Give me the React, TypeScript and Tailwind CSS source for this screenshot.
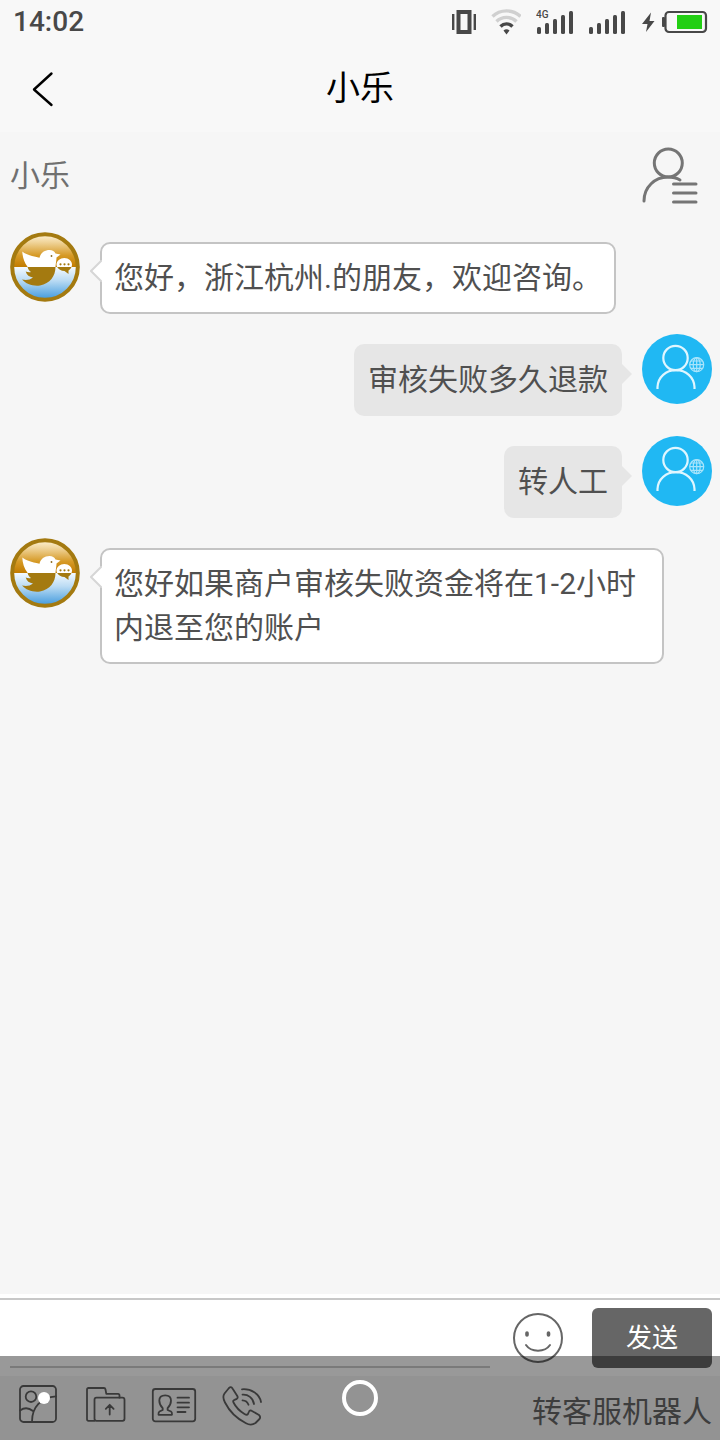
import type { ReactNode } from "react";

interface Message {
  readonly id: number;
  readonly from: "agent" | "user";
  readonly text: string;
}

const messages: readonly Message[] = [
  { id: 1, from: "agent", text: "您好，浙江杭州.的朋友，欢迎咨询。" },
  { id: 2, from: "user", text: "审核失败多久退款" },
  { id: 3, from: "user", text: "转人工" },
  { id: 4, from: "agent", text: "您好如果商户审核失败资金将在1-2小时内退至您的账户" },
];

function SignalBars({ label }: { readonly label?: string }) {
  return (
    <svg width="37" height="28" viewBox="0 0 37 28" fill="#484848">
      {label && (
        <text x="0" y="10" fontSize="10" fontWeight="500" fontFamily="Roboto, sans-serif">
          {label}
        </text>
      )}
      <rect x="1" y="19" width="4" height="7" rx="1.5" />
      <rect x="9" y="15" width="4" height="11" rx="1.5" />
      <rect x="17" y="11" width="4" height="15" rx="1.5" />
      <rect x="25" y="7" width="4" height="19" rx="1.5" />
      <rect x="33" y="3" width="4" height="23" rx="1.5" />
    </svg>
  );
}

function StatusBar() {
  return (
    <div className="flex h-11 items-center justify-between pl-[13px] pr-3 text-[#484848]">
      <span className="text-[28px] font-medium leading-8">14:02</span>
      <div className="flex items-center gap-[15px]">
        <svg width="24" height="28" viewBox="0 0 24 28" fill="none" stroke="#484848">
          <path d="M1.200 6v16M22.800 6v16" strokeWidth="2.400" />
          <rect x="6.500" y="4" width="11" height="20" strokeWidth="4" />
        </svg>
        <svg width="30" height="28" viewBox="0 0 30 28" fill="none" strokeWidth="3.400">
          <path d="M1.500 8.500C9 1 22 1 29.500 8.500" stroke="#d0d0d0" />
          <path d="M5.500 13.500C11 8 20 8 25.500 13.500" stroke="#d0d0d0" />
          <path d="M9.500 18.500C13 15 18 15 21.500 18.500" stroke="#484848" />
          <path d="M12.500 22.500Q15.500 20 18.500 22.500L15.500 26.500Z" fill="#484848" stroke="none" />
        </svg>
        <SignalBars label="4G" />
        <SignalBars />
        <div className="flex items-center gap-[6px]">
          <svg width="16" height="28" viewBox="0 0 16 28" fill="#484848">
            <path d="M11 4.500 2 16h5.500L6 24l8.500-11H9.500Z" />
          </svg>
          <svg width="46" height="28" viewBox="0 0 46 28">
            <rect x="0" y="9" width="3" height="10" rx="1" fill="#484848" />
            <rect x="3.500" y="4" width="40.500" height="20" rx="3.500" fill="none" stroke="#484848" strokeWidth="2.200" />
            <rect x="15" y="7" width="25" height="14" fill="#22cf13" />
          </svg>
        </div>
      </div>
    </div>
  );
}

function AgentAvatar() {
  return (
    <svg className="shrink-0" width="70" height="70" viewBox="0 0 70 70">
      <defs>
        <linearGradient id="sky" gradientUnits="userSpaceOnUse" x1="0" y1="2" x2="0" y2="35">
          <stop offset="0" stopColor="#fff3d6" />
          <stop offset="0.25" stopColor="#f0d49a" />
          <stop offset="0.65" stopColor="#d69a26" />
          <stop offset="1" stopColor="#c27c00" />
        </linearGradient>
        <linearGradient id="sea" gradientUnits="userSpaceOnUse" x1="0" y1="35" x2="0" y2="68">
          <stop offset="0" stopColor="#f4faff" />
          <stop offset="0.4" stopColor="#bcdcf4" />
          <stop offset="1" stopColor="#3d98dc" />
        </linearGradient>
        <clipPath id="above">
          <rect width="70" height="35" />
        </clipPath>
        <clipPath id="below">
          <rect y="35" width="70" height="35" />
        </clipPath>
        <g id="bird">
          <path d="M12.300 19.500C16 22.500 21 24 29.500 25.700C30.500 21 34.500 18 39.500 18C42.500 18 44.500 19.500 45.500 21.500L50.500 22.500L46.500 25.500C46.500 28 45.800 31 45.500 35C45.500 44 40 51.500 30 53.500C23 54.500 16 52 12 47.500C16 48.500 20 48 23 45.500C19.500 45 16.500 43 15.700 39.500C17.500 40.300 19.500 40.300 21 40C19 38.500 18 37 17.500 34.800C14 30 12.500 25 12.300 19.500Z" />
          <path d="M54.300 26c4.500 0 7.700 3 7.700 6.500c0 3-2 5-3.500 6v3.500l-4-3c-4.500 0-8-3-8-6.500s3.500-6.500 7.800-6.500Z" />
        </g>
      </defs>
      <circle cx="35" cy="35" r="33" fill="url(#sky)" clipPath="url(#above)" />
      <circle cx="35" cy="35" r="33" fill="url(#sea)" clipPath="url(#below)" />
      <g clipPath="url(#above)" fill="#fff">
        <use href="#bird" />
      </g>
      <g clipPath="url(#below)" fill="#a47a10">
        <use href="#bird" />
      </g>
      <circle cx="41.500" cy="24" r="0.900" fill="#8a6a20" />
      <circle cx="50.500" cy="32.300" r="1.100" fill="#a47a10" />
      <circle cx="54.500" cy="32.300" r="1.100" fill="#a47a10" />
      <circle cx="58.500" cy="32.300" r="1.100" fill="#a47a10" />
      <circle cx="35" cy="35" r="32.800" fill="none" stroke="#a47a10" strokeWidth="4" />
    </svg>
  );
}

function UserAvatar() {
  return (
    <svg className="shrink-0" width="70" height="70" viewBox="0 0 70 70" fill="none">
      <circle cx="35" cy="35" r="35" fill="#20b8f3" />
      <g stroke="#dff6ff" strokeWidth="2.200">
        <circle cx="33.500" cy="24" r="12.200" />
        <path d="M15.500 55v-2C16 43 24 36.200 34 36.200S52 43 52.500 53v2" />
      </g>
      <g stroke="#a9e4fb" strokeWidth="1.200">
        <circle cx="54.700" cy="30.700" r="7" />
        <ellipse cx="54.700" cy="30.700" rx="3.500" ry="7" />
        <path d="M47.700 30.700h14M54.700 23.700v14M49 27h11.400M49 34.400h11.400" />
      </g>
    </svg>
  );
}

function AgentMessage({ text }: { readonly text: string }) {
  return (
    <li className="flex items-start pl-[10px] pr-14">
      <AgentAvatar />
      <div className="relative ml-5 mt-[10px] rounded-[10px] border-2 border-[#c4c4c4] bg-white p-3">
        <svg className="absolute -left-3 top-4" width="12" height="22" viewBox="0 0 12 22">
          <path d="M12 0 1 11 12 22" fill="#fff" stroke="#d6d6d6" strokeWidth="2" />
        </svg>
        {text}
      </div>
    </li>
  );
}

function UserMessage({ text }: { readonly text: string }) {
  return (
    <li className="flex items-start justify-end pl-14 pr-2">
      <div className="relative mr-5 mt-[10px] rounded-[10px] bg-[#e6e6e6] p-[14px]">
        <svg className="absolute left-full top-5" width="10" height="20" viewBox="0 0 10 20">
          <path d="M0 0 10 10 0 20Z" fill="#e6e6e6" />
        </svg>
        {text}
      </div>
      <UserAvatar />
    </li>
  );
}

function ToolButton({ label, children }: { readonly label: string; readonly children: ReactNode }) {
  return (
    <button type="button" aria-label={label}>
      <svg
        width="48"
        height="48"
        viewBox="0 0 48 48"
        fill="none"
        stroke="#606060"
        strokeWidth="1.800"
        strokeLinecap="round"
        strokeLinejoin="round"
      >
        {children}
      </svg>
    </button>
  );
}

function Toolbar() {
  return (
    <div className="flex h-16 items-start justify-between bg-[#f5f5f5] pl-[14px] pr-2">
      <div className="flex gap-5 pt-1">
        <ToolButton label="图片">
          <rect x="6" y="6" width="36" height="36" rx="3.500" />
          <circle cx="17" cy="16.700" r="5.300" />
          <path d="M6 30.500C10 27.500 15 27.800 19 31M18 41.500C18 27 27 17.500 42 16.300" />
        </ToolButton>
        <ToolButton label="文件">
          <path d="M12.500 40.800H6.500Q5 40.800 5 39.300V9.500Q5 8 6.500 8H22Q23.200 8 23.500 9.500L24.300 13.800H36Q37.500 13.800 37.500 15.500V17.700" />
          <rect x="12.500" y="17.700" width="30" height="23.100" rx="2" />
          <path d="M27.700 34.500V24.800M23.800 28.800l3.900-4 3.900 4" />
        </ToolButton>
        <ToolButton label="名片">
          <rect x="2.800" y="9" width="42.400" height="32.300" rx="2.500" />
          <path d="M12.700 28.200C10.500 26 9.300 23 9.300 20.500C9.300 17.500 11.500 15.300 15.200 15.300S21 17.500 21 20.500C21 23 19.800 26 17.600 28.200V30L21 31.500Q22.200 32.200 22 34.800H8.500Q8.300 32.200 9.500 31.500L12.700 30Z" />
          <path d="M27.500 17.700H39M27.500 22.700H39M27.500 27.300H39M27.500 32h8" />
        </ToolButton>
        <ToolButton label="电话">
          <path d="M11 8L6.500 13.500Q4 17 7 22.500C11 30.500 18.500 38.500 28 43.200Q33 46 37.500 43L41.500 39Q43 37 41 35L33.500 30.700Q31.500 30 30.800 32L30 34Q29 35.500 26.500 34C21.500 31 17.500 26.500 15.500 22.500Q14.500 20.500 16.500 19.800L18.800 18.800Q20.300 17.800 19.300 16L14.500 8.500Q13 6 11 8Z" />
          <path d="M24 9.300C33 8.500 41.500 14 43 22M24.500 14.700C30 14.200 35 18 36 24M24.500 20.300Q29 20.500 30.500 24.700" />
        </ToolButton>
      </div>
      <button type="button" className="mt-[14px] text-[#666]">
        转客服机器人
      </button>
    </div>
  );
}

// Translucent system navigation bar, drawn over the bottom of the page
function SystemNav() {
  return (
    <div className="pointer-events-none absolute inset-x-0 bottom-0 grid h-[84px] grid-cols-3 items-center bg-black/40">
      <span className="ml-[38px] h-3 w-3 rounded-full bg-white" />
      <span className="h-9 w-9 justify-self-center rounded-full border-4 border-white" />
    </div>
  );
}

export default function App() {
  return (
    <div className="relative flex min-h-screen flex-col bg-[#f6f6f6] font-[Roboto,'Noto_Sans_CJK_SC',sans-serif] text-[30px] leading-[44px] text-[#505050]">
      <header className="bg-[#f8f8f8]">
        <StatusBar />
        <div className="grid h-[88px] grid-cols-[80px_1fr_80px] items-center">
          <button type="button" aria-label="返回" className="justify-self-start pl-5">
            <svg width="44" height="44" viewBox="0 0 44 44" fill="none" stroke="#000" strokeWidth="2.400" strokeLinecap="round" strokeLinejoin="round">
              <path d="M31.500 7.500 14 23.500 31.500 39" />
            </svg>
          </button>
          <h1 className="text-center text-[34px] text-black">小乐</h1>
        </div>
      </header>

      <main className="flex-1">
        <div className="flex h-[88px] items-center justify-between pl-[10px] pr-5">
          <h2 className="text-[#707070]">小乐</h2>
          <button type="button" aria-label="客服信息">
            <svg width="60" height="60" viewBox="0 0 60 60" fill="none" stroke="#757575" strokeWidth="3" strokeLinecap="round">
              <circle cx="28.300" cy="17" r="14" />
              <path d="M4 55C4 41 15 31 28 31Q35 31 40 34M33.500 38H56M33.500 47H56M33.500 56H56" />
            </svg>
          </button>
        </div>
        <ul className="flex flex-col gap-5 pt-3">
          {messages.map((message) =>
            message.from === "agent" ? (
              <AgentMessage key={message.id} text={message.text} />
            ) : (
              <UserMessage key={message.id} text={message.text} />
            ),
          )}
        </ul>
      </main>

      <footer className="bg-white pt-1">
        <form
          className="flex items-center border-t-2 border-[#c8c8c8] py-2 pl-[10px] pr-2"
          onSubmit={(event) => event.preventDefault()}
        >
          <input
            type="text"
            aria-label="输入消息"
            className="h-[60px] min-w-0 flex-1 border-b-2 border-[#ccc] outline-none"
          />
          <button type="button" aria-label="表情" className="ml-[22px] mr-7">
            <svg width="52" height="52" viewBox="0 0 52 52" fill="none" stroke="#666" strokeLinecap="round">
              <circle cx="26" cy="26" r="24" strokeWidth="2" />
              <path d="M15 21v2M36.500 21v2" strokeWidth="3.600" />
              <path d="M14 33C19 40.500 33 40.500 38 33" strokeWidth="2" />
            </svg>
          </button>
          <button type="submit" className="h-[60px] w-[120px] rounded-md bg-[#666] text-[26px] text-white">
            发送
          </button>
        </form>
        <Toolbar />
      </footer>

      <SystemNav />
    </div>
  );
}
